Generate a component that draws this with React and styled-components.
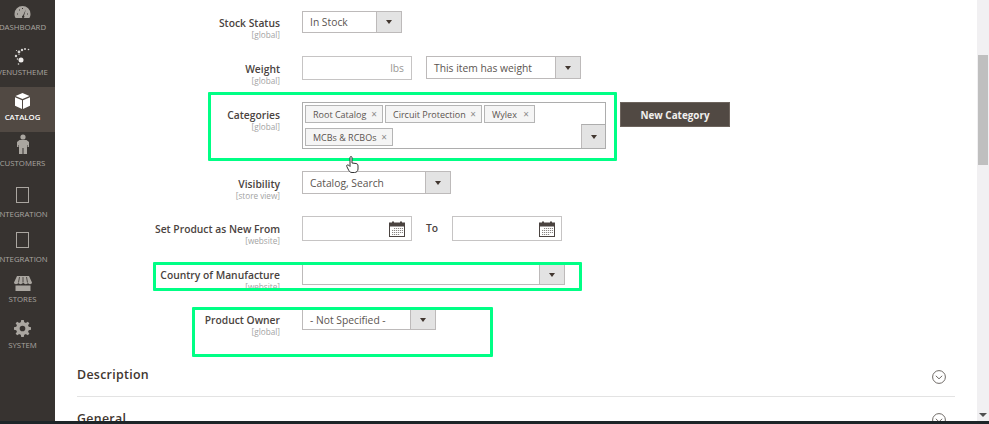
import React from "react";
import styled, { createGlobalStyle } from "styled-components";

const Global = createGlobalStyle`
  html, body { margin: 0; padding: 0; height: 100%; background: #fff; overflow: hidden; }
  body { font-family: "Open Sans", "Noto Sans", sans-serif; color: #41362f; }
`;

const Page = styled.div`
  width: 989px; height: 424px; display: flex; flex-direction: column; overflow: hidden; position: relative;
`;
const Body = styled.div`
  flex: 1; min-height: 0; display: flex;
`;
const BottomBar = styled.div`
  height: 3px; background: #1d2528; flex: none;
`;
const Sidebar = styled.nav`
  width: 55px; flex: none; background: #373330; display: flex; flex-direction: column;
`;
const NavItem = styled.div`
  height: ${p => p.$h}px; flex: none; display: flex; flex-direction: column; align-items: center;
  justify-content: flex-end; padding: 0 10px 10px 0; box-sizing: border-box; overflow: hidden;
  background: ${p => (p.$active ? "#514943" : "transparent")};
  color: ${p => (p.$active ? "#fff" : "#aaa6a0")};
  svg { display: block; flex: none; margin-bottom: ${p => p.$iconGap ?? 3}px; }
`;
const NavLabel = styled.span`
  font-size: 7.8px; line-height: 10px; white-space: nowrap; font-weight: ${p => (p.$active ? 600 : 400)};
`;
const Main = styled.main`
  flex: 1; min-width: 0; overflow: hidden; padding: 11px 22px 0; 
`;
const Form = styled.div`
  display: flex; flex-direction: column;
`;
const Row = styled.div`
  height: ${p => p.$h}px; flex: none; display: grid; grid-template-columns: 203px 1fr; column-gap: 22px;
`;
const LabelBlock = styled.div`
  text-align: right; padding-top: ${p => p.$top}px;
`;
const LabelText = styled.div`
  font-size: 10.3px; line-height: 14px; font-weight: 600; color: #4a4340; white-space: nowrap;
`;
const Scope = styled.div`
  font-size: 8.2px; line-height: 9px; color: #a3a3a3; white-space: nowrap;
`;
const Controls = styled.div`
  display: flex; align-items: flex-start;
`;
const Select = styled.div`
  width: ${p => p.$w}px; height: ${p => p.$h}px; flex: none; box-sizing: border-box; border: 1px solid #bdbaba;
  display: flex; background: #fff; margin-left: ${p => p.$ml ?? 0}px;
`;
const SelectValue = styled.div`
  flex: 1; min-width: 0; padding-left: 7px; font-size: 10.3px; color: #5b5450; display: flex; align-items: center; white-space: nowrap;
`;
const Arrow = styled.div`
  width: 24px; flex: none; background: #e3e3e3; border-left: 1px solid #bdbaba; display: flex; align-items: center; justify-content: center;
  &::after { content: ""; border-style: solid; border-width: 4px 3.5px 0; border-color: #41362f transparent transparent; }
`;
const Input = styled.div`
  width: 110px; height: ${p => p.$h}px; flex: none; box-sizing: border-box; border: 1px solid #c6c4c4; background: #fff;
  display: flex; align-items: center; justify-content: flex-end; padding-right: 7px; font-size: 10.3px; color: #9a9795;
  svg { display: block; margin-right: -1px; }
`;
const ToLabel = styled.div`
  width: 40px; flex: none; text-align: center; font-size: 10.3px; font-weight: 600; line-height: 25px; color: #4a4340;
`;
const MultiBox = styled.div`
  width: 304px; height: 47px; flex: none; box-sizing: border-box; border: 1px solid #adadad; background: #fff;
  position: relative; display: flex; flex-wrap: wrap; align-content: flex-start; gap: 5px 2px; padding: 2px 2px;
`;
const MultiArrow = styled(Arrow)`
  position: absolute; right: 0; bottom: 0; width: 23px; height: 23px; border-top: 1px solid #adadad;
`;
const Tag = styled.div`
  height: 18px; box-sizing: border-box; width: ${p => p.$w}px; border: 1px solid #b5b5b5; background: #f5f5f5; display: flex; align-items: center;
  justify-content: space-between; padding: 0 5px 0 7px; font-size: 9px; color: #5b5450; white-space: nowrap;
  span { color: #8a8a8a; font-size: 10px; line-height: 1; }
`;
const PrimaryButton = styled.div`
  width: 110px; height: 25px; flex: none; margin-left: 14px; background: #514943; border: 1px solid #6d645d; box-sizing: border-box;
  color: #f2f0ee; font-size: 9.9px; font-weight: 700; display: flex; align-items: center; justify-content: center;
`;
const Section = styled.div`
  display: flex; align-items: center; justify-content: space-between; height: ${p => p.$h}px; box-sizing: border-box;
  border-bottom: ${p => (p.$line ? "1px solid #e3e3e3" : "none")}; padding-right: 9px;
  svg { margin-top: 4px; }
`;
const SectionTitle = styled.div`
  font-size: 12.4px; font-weight: 600; color: #41362f; letter-spacing: 0.3px;
`;
const Scrollbar = styled.div`
  width: 12px; flex: none; background: #f1f0f2; padding: 55px 1px 0; box-sizing: border-box; display: flex; flex-direction: column; align-items: stretch;
`;
const Thumb = styled.div`
  height: 110px; background: #bfbfbf;
`;
const ScrollArrow = styled.div`
  margin: auto auto 4px; border-style: solid; border-width: 4px 4px 0; border-color: #505050 transparent transparent;
`;
const Highlight = styled.div`
  position: absolute; box-sizing: border-box; border: 3px solid #00ff85; border-radius: 1px; pointer-events: none;
  left: ${p => p.$x}px; top: ${p => p.$y}px; width: ${p => p.$w}px; height: ${p => p.$h}px;
`;
const Cursor = styled.svg`
  position: absolute; left: 346px; top: 156px;
`;

const Gauge = () => (
  <svg width="17" height="14" viewBox="0 0 17 14">
    <path fill="currentColor" d="M8.5 1A8 8 0 0 0 .5 9c0 1.6.4 3 1.2 4h13.6c.8-1 1.2-2.4 1.2-4a8 8 0 0 0-8-8z" />
    <path fill="#373330" d="M9 10.5 11.8 4.5 10 10.8a1.2 1.2 0 1 1-1-.3zM3 8.5h1v1H3zM13 8.5h1v1h-1zM5 4.5h1v1H5zM8 3h1v1H8z" />
  </svg>
);
const Dots = () => (
  <svg width="20" height="20" viewBox="0 0 20 20" fill="#d8d6d3">
    <circle cx="15.5" cy="2.500" r=".8" /><circle cx="12" cy="2" r="1" /><circle cx="9" cy="3" r="1.2" />
    <circle cx="6" cy="5" r="1.4" /><circle cx="3.5" cy="3.5" r=".6" /><circle cx="3" cy="9" r="1.2" /><circle cx="6" cy="7.500" r=".6" />
    <circle cx="8" cy="13" r="2.500" fill="#efedeb" /><circle cx="4.500" cy="12" r=".8" /><circle cx="5.500" cy="17" r=".8" />
  </svg>
);
const Box = () => (
  <svg width="15" height="16" viewBox="0 0 15 16" fill="#fff">
    <path d="M7.500 0 14.500 3 7.500 6 .5 3zM0 4.200 7 7.200V16L0 12.800zM15 4.200 8 7.200V16l7-3.200z" />
  </svg>
);
const Person = () => (
  <svg width="12" height="21" viewBox="0 0 12 21" fill="currentColor">
    <circle cx="6" cy="3" r="2.600" />
    <path d="M2.500 6h7L12 8v5h-1.500v-2l-.5 0V20H6.500v-6h-1v6H2V11H1.500v2H0V8z" />
  </svg>
);
const Frame = () => (
  <svg width="13" height="16" viewBox="0 0 13 16" fill="none" stroke="currentColor">
    <rect x=".5" y=".5" width="12" height="15" />
  </svg>
);
const Store = () => (
  <svg width="18" height="15" viewBox="0 0 18 15" fill="currentColor">
    <path d="M3 0h12l3 6.500c0 1-1 1.700-2 1.700s-1.600-.5-2-1.200c-.4.7-1.200 1.200-2.200 1.200S10 7.700 9.600 7h-.8c-.4.7-1.200 1.200-2.200 1.200S5 7.700 4.500 7C4 7.700 3 8.200 2 8.200S0 7.500 0 6.500z" />
    <path d="M1.500 9.500h15V15h-15z" />
    <path stroke="#373330" strokeWidth=".8" d="M5.500 1 4.500 6.500M9 1v5.500M12.500 1l1 5.500" />
  </svg>
);
const Gear = () => (
  <svg width="17" height="17" viewBox="0 0 24 24" fill="currentColor">
    <path d="M13.800 0h-3.600l-.6 3.200a9 9 0 0 0-2.300 1L4.600 2.300 2.300 4.600l1.900 2.700a9 9 0 0 0-1 2.300L0 10.200v3.600l3.200.6a9 9 0 0 0 1 2.300l-1.900 2.700 2.300 2.300 2.700-1.900a9 9 0 0 0 2.300 1l.6 3.200h3.600l.6-3.200a9 9 0 0 0 2.300-1l2.700 1.900 2.300-2.300-1.900-2.700a9 9 0 0 0 1-2.300l3.200-.6v-3.600l-3.200-.6a9 9 0 0 0-1-2.300l1.900-2.700-2.300-2.300-2.700 1.900a9 9 0 0 0-2.300-1zM12 8a4 4 0 1 1 0 8 4 4 0 0 1 0-8z" />
  </svg>
);
const Calendar = () => (
  <svg width="16" height="16" viewBox="0 0 16 16">
    <rect x=".5" y="2" width="15" height="13.500" fill="#fff" stroke="#4a4340" />
    <rect x=".5" y="2" width="15" height="3.500" fill="#4a4340" />
    <rect x="3" y=".5" width="2" height="3" fill="#4a4340" /><rect x="11" y=".5" width="2" height="3" fill="#4a4340" />
    <path stroke="#8a8582" strokeDasharray="1.200 .8" d="M5 7.500h9M3 9.500h11M3 11.500h11M3 13.500h8" />
  </svg>
);
const Chevron = () => (
  <svg width="14" height="14" viewBox="0 0 14 14" fill="none" stroke="#6f6a66">
    <circle cx="7" cy="7" r="6.400" />
    <path d="M3.800 5.800 7 8.800l3.200-3" />
  </svg>
);

const Field = ({ label, scope, h, top = 6, children }) => (
  <Row $h={h}>
    <LabelBlock $top={top}>
      <LabelText>{label}</LabelText>
      <Scope>{scope}</Scope>
    </LabelBlock>
    <Controls>{children}</Controls>
  </Row>
);

export default function App() {
  return (
    <>
      <Global />
      <Page>
        <Body>
          <Sidebar>
            <NavItem $h={42}><Gauge /><NavLabel>DASHBOARD</NavLabel></NavItem>
            <NavItem $h={45} $iconGap={0}><Dots /><NavLabel>VENUSTHEME</NavLabel></NavItem>
            <NavItem $h={45} $active><Box /><NavLabel $active>CATALOG</NavLabel></NavItem>
            <NavItem $h={46}><Person /><NavLabel>CUSTOMERS</NavLabel></NavItem>
            <NavItem $h={51} $iconGap={6}><Frame /><NavLabel>INTEGRATION</NavLabel></NavItem>
            <NavItem $h={45} $iconGap={6}><Frame /><NavLabel>INTEGRATION</NavLabel></NavItem>
            <NavItem $h={40}><Store /><NavLabel>STORES</NavLabel></NavItem>
            <NavItem $h={46}><Gear /><NavLabel>SYSTEM</NavLabel></NavItem>
          </Sidebar>
          <Main>
            <Form>
              <Field label="Stock Status" scope="[global]" h={45} top={5}>
                <Select $w={100} $h={22}><SelectValue>In Stock</SelectValue><Arrow /></Select>
              </Field>
              <Field label="Weight" scope="[global]" h={46}>
                <Input $h={24}>lbs</Input>
                <Select $w={155} $h={23} $ml={14}><SelectValue>This item has weight</SelectValue><Arrow /></Select>
              </Field>
              <Field label="Categories" scope="[global]" h={69}>
                <MultiBox>
                  <Tag $w={78}>Root Catalog<span>×</span></Tag>
                  <Tag $w={97}>Circuit Protection<span>×</span></Tag>
                  <Tag $w={51}>Wylex<span>×</span></Tag>
                  <Tag $w={88}>MCBs &amp; RCBOs<span>×</span></Tag>
                  <MultiArrow />
                </MultiBox>
                <PrimaryButton>New Category</PrimaryButton>
              </Field>
              <Field label="Visibility" scope="[store view]" h={45}>
                <Select $w={149} $h={23}><SelectValue>Catalog, Search</SelectValue><Arrow /></Select>
              </Field>
              <Field label="Set Product as New From" scope="[website]" h={48}>
                <Input $h={25}><Calendar /></Input>
                <ToLabel>To</ToLabel>
                <Input $h={25}><Calendar /></Input>
              </Field>
              <Field label="Country of Manufacture" scope="[website]" h={45} top={4}>
                <Select $w={263} $h={21}><SelectValue /><Arrow /></Select>
              </Field>
              <Field label="Product Owner" scope="[global]" h={44} top={4}>
                <Select $w={134} $h={21}><SelectValue>- Not Specified -</SelectValue><Arrow /></Select>
              </Field>
            </Form>
            <Section $h={44} $line><SectionTitle>Description</SectionTitle><Chevron /></Section>
            <Section $h={42}><SectionTitle>General</SectionTitle><Chevron /></Section>
          </Main>
          <Scrollbar><Thumb /><ScrollArrow /></Scrollbar>
        </Body>
        <BottomBar />
        <Highlight $x={208} $y={92} $w={409} $h={69} />
        <Highlight $x={153} $y={262} $w={429} $h={29} />
        <Highlight $x={192} $y={307} $w={301} $h={50} />
        <Cursor width="13" height="17" viewBox="0 0 13 17" fill="#fff" stroke="#333" strokeWidth="1">
          <path d="M4 1.500c0-1.300 2-1.300 2 0V7l4 .5c1.500.3 2 1 2 2.500v3c0 2-1.500 3.500-3.500 3.500H6c-1.500 0-2.500-.8-3.200-2L.8 10.500c-.7-1.300 1-2.300 2-1.200L4 10.500z" />
        </Cursor>
      </Page>
    </>
  );
}
